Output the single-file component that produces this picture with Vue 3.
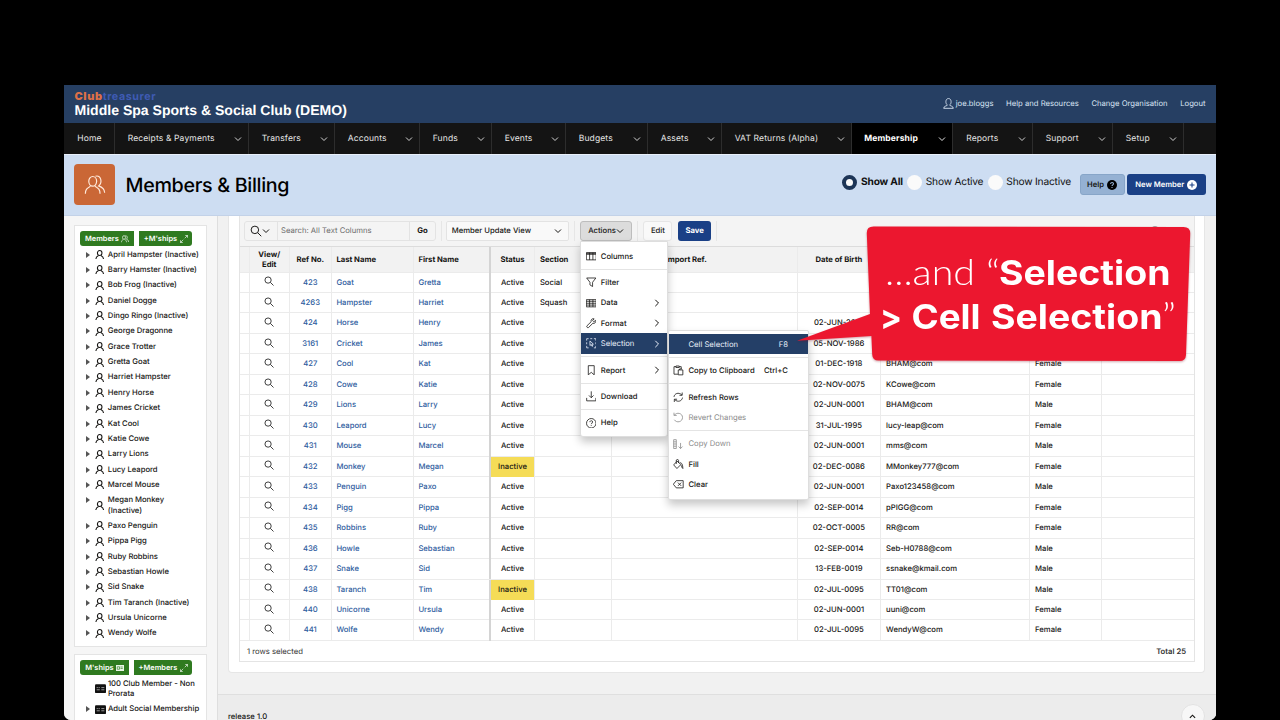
<script setup>
import { ref } from 'vue'

const filter = ref('Show All')
const filters = ['Show All', 'Show Active', 'Show Inactive']

const links = ['Help and Resources', 'Change Organisation', 'Logout']

const nav = [
  'Home', 'Receipts & Payments', 'Transfers', 'Accounts', 'Funds', 'Events', 'Budgets',
  'Assets', 'VAT Returns (Alpha)', 'Membership', 'Reports', 'Support', 'Setup'
]

const members = [
  'April Hampster (Inactive)', 'Barry Hamster (Inactive)', 'Bob Frog (Inactive)', 'Daniel Dogge',
  'Dingo Ringo (Inactive)', 'George Dragonne', 'Grace Trotter', 'Gretta Goat', 'Harriet Hampster',
  'Henry Horse', 'James Cricket', 'Kat Cool', 'Katie Cowe', 'Larry Lions', 'Lucy Leapord',
  'Marcel Mouse', 'Megan Monkey\n(Inactive)', 'Paxo Penguin', 'Pippa Pigg', 'Ruby Robbins',
  'Sebastian Howle', 'Sid Snake', 'Tim Taranch (Inactive)', 'Ursula Unicorne', 'Wendy Wolfe'
]

const memberships = [
  { name: '100 Club Member - Non\nProrata', leaf: true },
  { name: 'Adult Social Membership', leaf: false }
]

const heads = ['', 'View/\nEdit', 'Ref No.', 'Last Name', 'First Name', 'Status', 'Section', 'Import Ref.', 'Date of Birth', '', '', '']

const rows = [
  { no: 423, last: 'Goat', first: 'Gretta', section: 'Social' },
  { no: 4263, last: 'Hampster', first: 'Harriet', section: 'Squash' },
  { no: 424, last: 'Horse', first: 'Henry', dob: '02-JUN-2001' },
  { no: 3161, last: 'Cricket', first: 'James', dob: '05-NOV-1986' },
  { no: 427, last: 'Cool', first: 'Kat', dob: '01-DEC-1918', email: 'BHAM@com', sex: 'Female' },
  { no: 428, last: 'Cowe', first: 'Katie', dob: '02-NOV-0075', email: 'KCowe@com', sex: 'Female' },
  { no: 429, last: 'Lions', first: 'Larry', dob: '02-JUN-0001', email: 'BHAM@com', sex: 'Male' },
  { no: 430, last: 'Leapord', first: 'Lucy', dob: '31-JUL-1995', email: 'lucy-leap@com', sex: 'Female' },
  { no: 431, last: 'Mouse', first: 'Marcel', dob: '02-JUN-0001', email: 'mms@com', sex: 'Male' },
  { no: 432, last: 'Monkey', first: 'Megan', inactive: true, dob: '02-DEC-0086', email: 'MMonkey777@com', sex: 'Female' },
  { no: 433, last: 'Penguin', first: 'Paxo', dob: '02-JUN-0001', email: 'Paxo123458@com', sex: 'Male' },
  { no: 434, last: 'Pigg', first: 'Pippa', dob: '02-SEP-0014', email: 'pPIGG@com', sex: 'Female' },
  { no: 435, last: 'Robbins', first: 'Ruby', dob: '02-OCT-0005', email: 'RR@com', sex: 'Female' },
  { no: 436, last: 'Howle', first: 'Sebastian', dob: '02-SEP-0014', email: 'Seb-H0788@com', sex: 'Male' },
  { no: 437, last: 'Snake', first: 'Sid', dob: '13-FEB-0019', email: 'ssnake@kmail.com', sex: 'Male' },
  { no: 438, last: 'Taranch', first: 'Tim', inactive: true, dob: '02-JUL-0095', email: 'TT01@com', sex: 'Male' },
  { no: 440, last: 'Unicorne', first: 'Ursula', dob: '02-JUN-0001', email: 'uuni@com', sex: 'Female' },
  { no: 441, last: 'Wolfe', first: 'Wendy', dob: '02-JUL-0095', email: 'WendyW@com', sex: 'Female' }
]

// icon paths on a 16 x 16 grid
const icons = {
  columns: 'M.5 2.5h15v11H.5zM.5 5h15M5.5 2.5v11M10.5 2.5v11M.5 3.5h15',
  filter: 'M1 1.5h14L10 8v6.5L6 12V8z',
  data: 'M.5 2.5h15v11H.5zM.5 5h15M.5 8h15M.5 10.8h15M5.5 2.5v11M10.5 2.5v11',
  format: 'M14.6 3.6l-2.7 2.1-1.8-1.8 2.3-2.6C9.5.2 7 2.6 7.9 5.6L1.4 12c-1.1 1.4 1 3.6 2.5 2.5l6.5-6.4c3 .8 5.2-1.7 4.2-4.5z',
  selection: 'M1 4V1h3M6.5 1h3M12 1h3v3M15 6.5v3M1 6.5v3M1 12v3h3M15 12v3h-3M6 4.5v7l1.8-1.6 1.4 2.9 1.2-.6L9 9.4h2.3z',
  report: 'M3.5 1h9v14L8 11.2 3.5 15z',
  download: 'M8 .5v9.5M4.5 6.8L8 10.3l3.5-3.5M1 10.5v4.5h14v-4.5',
  help: 'M8 .8a7.2 7.2 0 1 0 0 14.4A7.2 7.2 0 0 0 8 .8zM5.9 6.3c0-2.9 4.3-2.7 4.3-.2 0 1.6-2.2 1.6-2.2 3.3M8 11v1.2',
  copy: 'M4.5 2.5h-3v11.5h6M9.5 2.5h3V6M4.5 1.5h5v2.3h-5zM8 7.5h7v7.5H8zM10 7.5V6h3.5',
  refresh: 'M1.5 7.5C2 2.5 8.5-.5 13.5 4.5M14 .8v4.2h-4.2M14.5 8.5c-.5 5-7 8-12 3M2 15.2V11h4.2',
  revert: 'M2 4.8c3.5-5 12.5-3.2 12.5 3.5 0 7-9 9-12.5 3.5M1.5 1v4.2h4.2',
  down: 'M1 1h4v13.5H1zM1 4.3h4M1 7.6h4M1 11h4M11.5 6v8.5M8.5 11.5l3 3 3-3',
  fill: 'M6 3.5L1 9l5 5.5L12 8.5 5.5 2.5M5 7.5V2.3c0-2 3.5-2 3.5 0V6M10.5 5.5c3 .5 4.3 2.5 4.5 9-1-.8-2-2.5-2.5-5',
  clear: 'M5 2.5h10.5v11H5L.5 8zM7.5 5.5l5 5M12.5 5.5l-5 5'
}

const menu = [
  { label: 'Columns', icon: 'columns' },
  null,
  { label: 'Filter', icon: 'filter' },
  { label: 'Data', icon: 'data', sub: true },
  { label: 'Format', icon: 'format', sub: true },
  { label: 'Selection', icon: 'selection', sub: true, active: true },
  null,
  { label: 'Report', icon: 'report', sub: true },
  null,
  { label: 'Download', icon: 'download' },
  null,
  { label: 'Help', icon: 'help' }
]

const submenu = [
  { label: 'Cell Selection', key: 'F8', active: true },
  null,
  { label: 'Copy to Clipboard', icon: 'copy', key: 'Ctrl+C' },
  null,
  { label: 'Refresh Rows', icon: 'refresh' },
  { label: 'Revert Changes', icon: 'revert', disabled: true },
  null,
  { label: 'Copy Down', icon: 'down', disabled: true },
  { label: 'Fill', icon: 'fill' },
  { label: 'Clear', icon: 'clear' }
]
</script>

<template>
  <div class="window">
    <header class="top">
      <div class="brand">
        <div class="logo"><span class="club">Club</span><span class="treasurer">treasurer</span></div>
        <div class="org">Middle Spa Sports &amp; Social Club (DEMO)</div>
      </div>
      <div class="links">
        <span class="user">
          <svg viewBox="0 0 16 16"><path d="M8 .8c-5 0-4.500 8.200-1.600 9.200 0 1.800-5.400 1.300-5.400 5h14c0-3.700-5.400-3.200-5.400-5C12.500 9 13 .8 8 .8z" /></svg>joe.bloggs
        </span>
        <span v-for="link in links" :key="link">{{ link }}</span>
      </div>
    </header>

    <nav>
      <a v-for="item in nav" :key="item" :class="{ current: item === 'Membership' }">
        {{ item }}
        <svg v-if="item !== 'Home'" viewBox="0 0 8 8"><path d="M1 2.500l3 3 3-3" /></svg>
      </a>
      <i></i>
    </nav>

    <div class="title">
      <div class="badge">
        <svg viewBox="0 0 24 24">
          <ellipse cx="9.500" cy="8" rx="4.300" ry="5.300" />
          <path d="M1.500 21.500c0-4.500 1.700-6 5.500-8.200M17.500 21.500c0-4.500-1.700-6-5.500-8.200M12.500 2.500c6-2 8 6.500 3.500 10.500 4 1.500 6.500 3 6.500 7.500" />
        </svg>
      </div>
      <h1>Members &amp; Billing</h1>
      <div class="filters">
        <label v-for="f in filters" :key="f" :class="{ on: f === filter }" @click="filter = f">
          <i></i><span>{{ f }}</span>
        </label>
      </div>
      <button class="help">Help
        <svg viewBox="0 0 16 16"><circle cx="8" cy="8" r="8" /><path d="M5.800 6.200c0-3 4.600-2.800 4.600-.1C10.400 7.800 8 7.800 8 9.600M8 11.200v1.700" /></svg>
      </button>
      <button class="new">New Member
        <svg viewBox="0 0 16 16"><circle cx="8" cy="8" r="8" /><path d="M8 4v8M4 8h8" /></svg>
      </button>
    </div>

    <div class="body">
      <aside>
        <section class="card first">
          <div class="tabs">
            <span class="w54">Members
              <svg viewBox="0 0 16 16"><ellipse cx="6" cy="5" rx="3" ry="3.700" /><path d="M1 14.500c0-3.500 1-4 3.500-5.500M11 14.500c0-3.500-1-4-3.500-5.500M8.500 1.500c4-1 5.500 4 2.500 7 3 1 4 2 4 5.500" /></svg>
            </span>
            <span class="w54">+M'ships
              <svg viewBox="0 0 16 16"><path d="M9.500 6.500L15 1M10.500 1H15v4.500M6.500 9.500L1 15M1 10.500V15h4.500" /></svg>
            </span>
          </div>
          <div v-for="m in members" :key="m" class="node">
            <b></b>
            <svg viewBox="0 0 16 16"><ellipse cx="8" cy="5.200" rx="3.900" ry="4.300" /><path d="M1.500 15.500c0-3.700 1.500-4.500 4.500-6M14.500 15.500c0-3.700-1.500-4.500-4.500-6" /></svg>
            <span>{{ m }}</span>
          </div>
        </section>

        <section class="card second">
          <div class="tabs">
            <span class="w48">M'ships
              <svg class="solid" viewBox="0 0 16 16"><path class="plate" d="M0 2h16v12H0z" /><path class="cut" d="M2.500 5.500h4.500v5H2.500zM9 6h4.500M9 9h4.500" /></svg>
            </span>
            <span class="w58">+Members
              <svg viewBox="0 0 16 16"><path d="M9.500 6.500L15 1M10.500 1H15v4.500M6.500 9.500L1 15M1 10.500V15h4.500" /></svg>
            </span>
          </div>
          <div v-for="m in memberships" :key="m.name" class="node">
            <b :class="{ leaf: m.leaf }"></b>
            <svg class="ship" viewBox="0 0 20 16"><rect width="20" height="16" rx="2" /><path d="M3 6h2.200M6.500 6h2.200M3 10h5.700M11.500 6h5.500M11.500 10h5.500" /></svg>
            <span>{{ m.name }}</span>
          </div>
        </section>
      </aside>

      <main>
        <div class="panel">
          <div class="grid">
            <div class="toolbar">
              <div class="search">
                <span class="mag">
                  <svg viewBox="0 0 16 16"><circle cx="6.500" cy="6.500" r="5" /><path d="M10.300 10.300L15 15" /></svg>
                  <svg class="chev" viewBox="0 0 8 8"><path d="M1 2.500l3 3 3-3" /></svg>
                </span>
                <span class="query">Search: All Text Columns</span>
                <span class="go">Go</span>
              </div>
              <i class="rule"></i>
              <div class="select">Member Update View
                <svg class="chev" viewBox="0 0 8 8"><path d="M1 2.500l3 3 3-3" /></svg>
              </div>
              <i class="rule"></i>
              <button class="actions">Actions
                <svg class="chev" viewBox="0 0 8 8"><path d="M1 2.500l3 3 3-3" /></svg>
              </button>
              <i class="rule"></i>
              <button class="edit">Edit</button>
              <button class="save">Save</button>
              <i class="rule"></i>
              <svg class="reset" viewBox="0 0 10 10"><circle cx="5" cy="5" r="4.500" /></svg>
            </div>

            <div class="line head">
              <span v-for="(h, i) in heads" :key="i" :class="'c' + i">{{ h }}</span>
            </div>
            <div v-for="r in rows" :key="r.no" class="line">
              <span></span>
              <span class="c1">
                <svg viewBox="0 0 16 16"><circle cx="6.500" cy="6.500" r="5" /><path d="M10.200 10.200L15.200 15.200" /></svg>
              </span>
              <span class="c2 link">{{ r.no }}</span>
              <span class="link">{{ r.last }}</span>
              <span class="c4 link">{{ r.first }}</span>
              <span class="c5" :class="{ inactive: r.inactive }">{{ r.inactive ? 'Inactive' : 'Active' }}</span>
              <span>{{ r.section }}</span>
              <span></span>
              <span class="c8">{{ r.dob }}</span>
              <span>{{ r.email }}</span>
              <span>{{ r.sex }}</span>
              <span></span>
            </div>
            <div class="summary"><span>1 rows selected</span><b>Total 25</b></div>
          </div>
        </div>
        <footer>release 1.0
          <span class="up"><svg viewBox="0 0 8 8"><path d="M1 5.500l3-3 3 3" /></svg></span>
        </footer>
      </main>
    </div>

    <div class="menu main-menu">
      <template v-for="(m, i) in menu" :key="i">
        <hr v-if="!m">
        <div v-else class="item" :class="{ active: m.active }">
          <svg viewBox="0 0 16 16"><path :d="icons[m.icon]" /></svg>
          <span>{{ m.label }}</span>
          <svg v-if="m.sub" class="arrow" viewBox="0 0 8 8"><path d="M2.300 .8l3.200 3.200-3.200 3.200" /></svg>
        </div>
      </template>
    </div>

    <div class="menu sub-menu">
      <template v-for="(m, i) in submenu" :key="i">
        <hr v-if="!m">
        <div v-else class="item" :class="{ active: m.active, disabled: m.disabled }">
          <svg viewBox="0 0 16 16"><path v-if="m.icon" :d="icons[m.icon]" /></svg>
          <span>{{ m.label }}</span>
          <kbd v-if="m.key">{{ m.key }}</kbd>
        </div>
      </template>
    </div>
  </div>

  <svg class="callout" viewBox="790 220 410 150">
    <path d="M873.500 226.500L1183.500 227q7 0 6.700 7l-4.200 121q-.4 6-6.500 6L878.500 360.500q-6 0-6.300-6l-.8-18.500L797 340.800 870 314 866.800 233.500q-.3-7 6.700-7z" />
    <text class="light" x="885" y="284.500" textLength="90" lengthAdjust="spacingAndGlyphs">...and</text>
    <text class="light" x="986" y="284.500" textLength="14" lengthAdjust="spacingAndGlyphs">“</text>
    <text x="999" y="284.500" textLength="171.500" lengthAdjust="spacingAndGlyphs">Selection</text>
    <text x="880" y="329" textLength="22" lengthAdjust="spacingAndGlyphs">&gt;</text>
    <text x="911.500" y="328.500" textLength="69" lengthAdjust="spacingAndGlyphs">Cell</text>
    <text x="991" y="328.500" textLength="171.500" lengthAdjust="spacingAndGlyphs">Selection</text>
    <text class="light" x="1162" y="328.500" textLength="14" lengthAdjust="spacingAndGlyphs">”</text>
  </svg>
</template>

<style>
body {
  background: #000;
  overflow: hidden;
}
</style>

<style scoped>
* {
  box-sizing: border-box;
}

.window {
  position: relative;
  width: 1152px;
  height: 635px;
  margin: 85px 64px 0;
  overflow: hidden;
  background: #f5f5f5;
  border-radius: 0 0 7px 7px;
  font: 500 7.68px Inter, "Liberation Sans", sans-serif;
  color: #161513;
  text-rendering: geometricPrecision;
}

svg {
  display: block;
  flex: none;
  fill: none;
  stroke: currentColor;
  stroke-width: 1.3;
}

button {
  display: flex;
  align-items: center;
  justify-content: center;
  padding: 0;
  font: inherit;
  color: inherit;
  border: 0;
  text-rendering: inherit;
}

.chev {
  width: 8px;
  height: 8px;
  stroke-width: 1;
}

/* header */
.top {
  display: flex;
  justify-content: space-between;
  height: 38px;
  background: #263f63;
}

.brand {
  padding: 5px 0 0 10.5px;
}

.logo {
  display: flex;
  align-items: baseline;
  height: 11.5px;
  line-height: 12px;
}

.club {
  font-size: 11px;
  font-weight: 900;
  color: #dd7048;
  letter-spacing: .6px;
}

.treasurer {
  font-size: 10.7px;
  font-weight: 700;
  color: #3f5bb4;
  letter-spacing: .6px;
}

.org {
  font: bold 14.05px/16px "Liberation Sans", sans-serif;
  color: #fff;
  white-space: nowrap;
}

.links {
  display: flex;
  align-items: center;
  gap: 12.6px;
  padding: 0 10.5px 2px 0;
  color: #d9e4f3;
  font-weight: 400;
}

.user {
  display: flex;
  align-items: center;
  gap: 2px;
}

.user svg {
  width: 11px;
  height: 11px;
}

nav {
  display: grid;
  grid-template-columns: 50.5px 134px 86px 85px 72px 74px 82px 74px 130.5px 101px 79.5px 80px 71px 1fr;
  height: 30.5px;
  background: #141414;
  font-size: 8.5px;
  font-weight: 400;
  color: #e6e6e6;
}

nav a {
  display: flex;
  align-items: center;
  justify-content: space-between;
  padding: 1.8px 6px 0 13.2px;
  border-right: 1px solid #2d2d2d;
  letter-spacing: .14px;
  white-space: nowrap;
}

nav svg {
  width: 8px;
  height: 8px;
  stroke-width: .9;
}

nav .current {
  padding-left: 12.2px;
  background: #000;
  color: #fff;
  font-weight: 700;
}

/* title bar */
.title {
  display: flex;
  align-items: center;
  height: 62px;
  padding: 0 10.5px 0 10px;
  background: #cdddf2;
  border-top: 1px solid #e9f0fa;
  border-bottom: 1px solid #c3d2e8;
}

.badge {
  display: grid;
  place-items: center;
  width: 41px;
  height: 41px;
  border-radius: 4px;
  background: #ca6736;
  color: #ffe9da;
}

.badge svg {
  width: 22px;
  height: 22px;
  stroke-width: 1.3;
}

h1 {
  margin: 0 auto 0 10.5px;
  font-size: 19.7px;
  font-weight: 500;
  letter-spacing: -.32px;
  color: #000;
}

.filters {
  display: flex;
  gap: 4.3px;
  margin-right: 8.5px;
  margin-top: -4.5px;
  font-size: 10.2px;
  font-weight: 400;
  letter-spacing: -.2px;
  color: #111;
}

.filters label {
  display: flex;
  align-items: center;
  gap: 3.7px;
}

.filters i {
  width: 15px;
  height: 15px;
  border-radius: 50%;
  background: #fafafa;
}

.filters .on {
  font-weight: 700;
}

.filters .on i {
  border: 4px solid #1d3557;
}

.help,
.new {
  height: 21px;
  gap: 3px;
  border-radius: 3px;
  font-size: 7.6px;
  font-weight: 600;
}

.help {
  width: 45px;
  margin-right: 2.5px;
  background: #95b1d3;
  border: 1px solid #87a5c8;
}

.new {
  width: 78.5px;
  background: #1a4086;
  color: #fff;
}

.help svg,
.new svg {
  width: 10px;
  height: 10px;
  stroke-width: 1.7;
}

.help circle {
  fill: #000;
  stroke: none;
}

.help path {
  stroke: #95b1d3;
}

.new circle {
  fill: #fff;
  stroke: none;
}

.new path {
  stroke: #1a4086;
}

.body {
  display: flex;
  height: 504.5px;
}

/* tree */
aside {
  width: 153.5px;
  padding: 9.5px 10px 0 10.4px;
  background: #f6f6f6;
  border-right: 1px solid #dedede;
}

.card {
  padding: 5px 0 0 5px;
  background: #fff;
  border: 1px solid #e4e4e4;
}

.first {
  height: 421.5px;
  margin-bottom: 7.5px;
}

.second {
  height: 90px;
}

.tabs {
  display: flex;
  gap: 5px;
  margin-bottom: 1px;
}

.tabs span {
  display: flex;
  align-items: center;
  justify-content: center;
  gap: 2.5px;
  height: 15px;
  background: #2f7a20;
  color: #fff;
  font-size: 7.4px;
  font-weight: 600;
}

.tabs span:first-child {
  border-radius: 3px 0 0 3px;
}

.tabs span:last-child {
  border-radius: 0 3px 3px 0;
}

.tabs svg {
  width: 8px;
  height: 8px;
}

.w54 {
  width: 53.5px;
}

.w48 {
  width: 48.5px;
}

.w58 {
  width: 58.5px;
}

.plate {
  fill: #e9f5e6;
  stroke: none;
}

.cut {
  stroke: #2f7a20;
}

.node {
  display: flex;
  align-items: center;
  padding: 2.59px 0;
  line-height: 10.2px;
  letter-spacing: -.02px;
  white-space: pre;
}

.node b {
  align-self: flex-start;
  margin: 2px 5.8px 0 5.2px;
  border-left: 4.6px solid #555;
  border-top: 3px solid transparent;
  border-bottom: 3px solid transparent;
}

.node .leaf {
  visibility: hidden;
}

.node svg {
  width: 9.4px;
  height: 9.4px;
  margin-right: 3.1px;
  stroke-width: 1.8;
}

.node .ship {
  width: 11px;
  margin: 0 1.9px 0 -.4px;
  fill: #111;
  stroke: none;
}

.node .ship path {
  stroke: #ccc;
  stroke-width: 1.3;
}

/* report */
main {
  flex: 1;
  display: flex;
  flex-direction: column;
  background: #f1f1f1;
}

.panel {
  flex: none;
  height: 457px;
  margin: 0 11px 21.5px 10.5px;
  padding: 0 9.5px;
  background: #fff;
  border: solid #e6e6e6;
  border-width: 0 1px 1px;
  border-radius: 0 0 4px 4px;
}

.grid {
  border: 1px solid #e4e4e4;
  border-top: 0;
}

.toolbar {
  display: flex;
  align-items: center;
  height: 30.5px;
  padding: 0 33.5px 0 4.5px;
  background: #f4f4f4;
  white-space: nowrap;
}

.search {
  display: flex;
  width: 192px;
  height: 20.5px;
  border: 1px solid #e3e3e3;
  border-radius: 3px;
  line-height: 18.5px;
}

.mag {
  display: flex;
  align-items: center;
  width: 31.5px;
  padding-left: 4.5px;
}

.mag svg:first-child {
  width: 12px;
  height: 12px;
}

.query {
  width: 133.5px;
  padding-left: 3.5px;
  border: solid #e3e3e3;
  border-width: 0 1px;
  color: #6b6b6b;
  font-weight: 400;
}

.go {
  flex: 1;
  text-align: center;
  font-weight: 700;
}

.rule {
  width: 1px;
  height: 20px;
  margin: 0 4.9px 0 4.5px;
  background: #e6e6e6;
}

.select {
  display: flex;
  align-items: center;
  justify-content: space-between;
  width: 123px;
  height: 20.5px;
  padding: 0 6px 0 4.3px;
  background: #f9f9f9;
  border: 1px solid #e3e3e3;
  border-radius: 2px;
}

.actions,
.edit,
.save {
  height: 20.5px;
  border-radius: 3px;
}

.actions {
  width: 52.5px;
  background: #dcdcdc;
  border: 1px solid #bdbdbd;
}

.edit {
  width: 29px;
  margin: 0 5.5px 0 .7px;
  background: #f9f9f9;
  border: 1px solid #e6e6e6;
}

.save {
  width: 33.5px;
  background: #1a4086;
  color: #fff;
  font-weight: 700;
}

.reset {
  width: 10px;
  height: 10px;
  margin-left: auto;
  color: #888;
  stroke-width: .8;
}

.line {
  display: grid;
  grid-template-columns: 10px 40.5px 41.5px 82px 77.5px 44px 77px 185.6px 83.6px 149px 72px 1fr;
  height: 20.48px;
  line-height: 20.4px;
  border-bottom: 1px solid #ebebeb;
  white-space: pre;
}

.line span {
  padding-left: 4.9px;
  border-right: 1px solid #ebebeb;
}

.line span:last-child {
  border-right: 0;
}

.line .c1,
.line .c2,
.line .c5,
.line .c8 {
  padding: 0;
  text-align: center;
}

.line .c4 {
  border-right: 2px solid #d4d4d4;
}

.line svg {
  width: 10px;
  height: 10px;
  margin: 3.6px auto 0;
  color: #333;
  stroke-width: 1.5;
}

.line .link {
  color: #2e5c9e;
}

.line .inactive {
  background: #f5dc57;
}

.head {
  height: 26.5px;
  line-height: 26px;
  background: #f2f2f2;
  border-top: 1px solid #dcdcdc;
  font-weight: 700;
}

.head .c1 {
  padding-top: 3px;
  line-height: 10.2px;
}

.head .c7 {
  padding-left: 53.5px;
}

.head .c6,
.head .c9,
.head .c10 {
  border-right-color: transparent;
}

.summary {
  display: flex;
  justify-content: space-between;
  height: 20.5px;
  padding: 0 7.5px;
  line-height: 21px;
  color: #333;
  font-weight: 400;
}

.summary b {
  font-weight: 600;
}

footer {
  position: relative;
  flex: 1;
  padding: 17.5px 0 0 10.5px;
  line-height: 8px;
  background: #ececec;
  border-top: 1px solid #dfdfdf;
}

.up {
  position: absolute;
  right: 11.5px;
  top: 9px;
  display: grid;
  place-items: center;
  width: 24px;
  height: 24px;
  border: 1px solid #e2e2e2;
  border-radius: 50%;
  background: #f7f7f7;
}

.up svg {
  width: 7px;
  height: 7px;
}

/* menus */
.menu {
  position: absolute;
  background: #fff;
  border: 1px solid #dedede;
  box-shadow: 0 5px 9px rgba(0, 0, 0, .22);
}

.main-menu {
  left: 515.8px;
  top: 156px;
  width: 88.5px;
  height: 196px;
  padding-top: 3.8px;
  border-radius: 0 0 3px 3px;
}

.sub-menu {
  left: 603.5px;
  top: 244.5px;
  width: 141.5px;
  height: 170px;
  padding-top: 3.5px;
  border-radius: 2px;
}

.menu hr {
  height: 1px;
  margin: 2.5px 0;
  border: 0;
  background: #e4e4e4;
}

.item {
  display: flex;
  align-items: center;
  height: 20.43px;
  padding: 0 6px 0 4.9px;
}

.item svg {
  width: 10.5px;
  height: 10.5px;
  margin-right: 4.6px;
  stroke-width: 1.2;
}

.item .arrow {
  width: 8px;
  height: 8px;
  margin: 0 0 0 auto;
  stroke-width: 1;
}

.item kbd {
  margin-left: auto;
  padding-right: 14px;
  font: inherit;
}

.active {
  background: #243f67;
  color: #e8effa;
  font-weight: 400;
}

.disabled {
  color: #8a8a8a;
  font-weight: 400;
}

.callout {
  position: absolute;
  left: 790px;
  top: 220px;
  width: 410px;
  height: 150px;
  fill: #ec172f;
  stroke: none;
  filter: drop-shadow(0 1px 1px rgba(120, 0, 20, .35));
}

.callout text {
  font: 700 34px Inter, sans-serif;
  fill: #fff;
}

.callout .light {
  font: 300 35px Lato, sans-serif;
}
</style>
